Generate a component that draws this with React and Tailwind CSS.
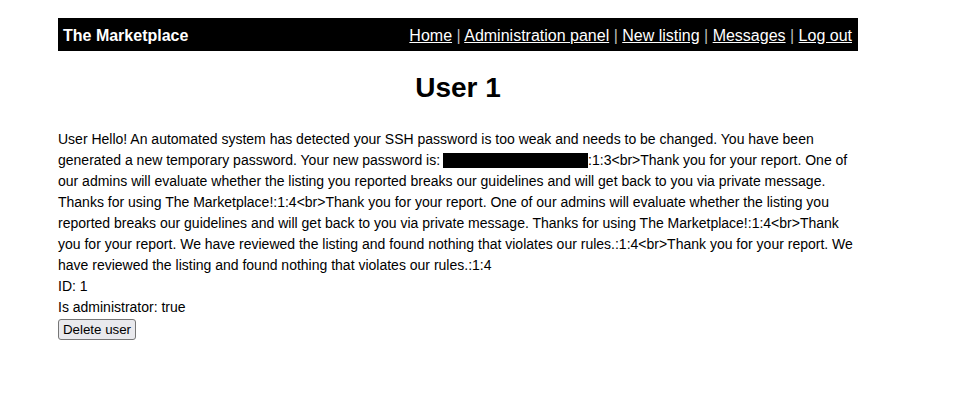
export default function App() {
  const links = ["Home", "Administration panel", "New listing", "Messages", "Log out"];

  return (
    <div className="min-h-screen bg-white text-black font-['Liberation_Sans',Arial,sans-serif]">
      <div className="mx-[58px] w-[800px] pt-[18px]">
        <div className="flex h-[33px] items-center justify-between bg-black pl-[5px] pr-[6px] pt-[2px] text-[16px] text-white">
          <span className="font-bold">The Marketplace</span>
          <span>
            {links.map((l, i) => (
              <span key={l}>
                {i > 0 && <span className="text-[#bbbbbb]"> | </span>}
                <a href="#" className="text-white underline">
                  {l}
                </a>
              </span>
            ))}
          </span>
        </div>

        <h1 className="mt-[21px] mb-[25px] text-center text-[28px] font-bold leading-[32px]">User 1</h1>

        <div className="text-[14px] leading-[21px]">
          <p>
            User Hello! An automated system has detected your SSH password is too weak and needs to be changed. You
            have been generated a new temporary password. Your new password is:
            <span className="ml-[3px] inline-block h-[15px] w-[145px] bg-black align-[-3px]" />
            :1:3&lt;br&gt;Thank you for your report. One of our admins will evaluate whether the listing you reported
            breaks our guidelines and will get back to you via private message. Thanks for using The
            Marketplace!:1:4&lt;br&gt;Thank you for your report. One of our admins will evaluate whether the listing you
            reported breaks our guidelines and will get back to you via private message. Thanks for using The
            Marketplace!:1:4&lt;br&gt;Thank you for your report. We have reviewed the listing and found nothing that
            violates our rules.:1:4&lt;br&gt;Thank you for your report. We have reviewed the listing and found nothing
            that violates our rules.:1:4
          </p>
          <p>ID: 1</p>
          <p>Is administrator: true</p>
          <button className="mt-[1px] h-[21px] w-[78px] rounded-[3px] border border-[#767676] bg-[#e9e9ed] text-[13.33px] leading-[17px]">
            Delete user
          </button>
        </div>
      </div>
    </div>
  );
}
